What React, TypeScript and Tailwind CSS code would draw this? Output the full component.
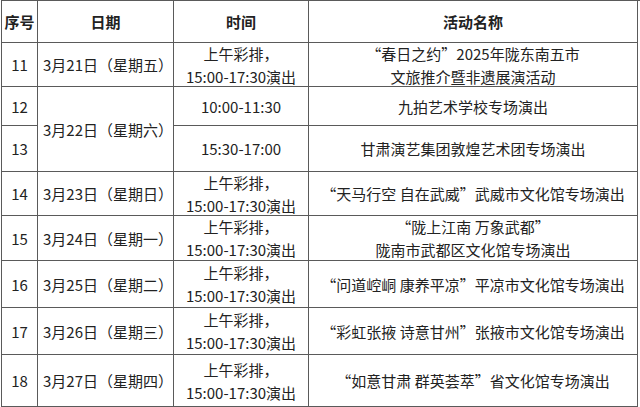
import React from "react";

type Row = {
  no: string;
  date?: string;
  dateSpan?: number;
  time: string[];
  name: string[];
  h: string;
};

const rows: Row[] = [
  { no: "11", date: "3月21日（星期五）", time: ["上午彩排，", "15:00-17:30演出"], name: ["“春日之约”2025年陇东南五市", "文旅推介暨非遗展演活动"], h: "h-[44px]" },
  { no: "12", date: "3月22日（星期六）", dateSpan: 2, time: ["10:00-11:30"], name: ["九拍艺术学校专场演出"], h: "h-[39px]" },
  { no: "13", time: ["15:30-17:00"], name: ["甘肃演艺集团敦煌艺术团专场演出"], h: "h-[46px]" },
  { no: "14", date: "3月23日（星期日）", time: ["上午彩排，", "15:00-17:30演出"], name: ["“天马行空 自在武威”武威市文化馆专场演出"], h: "h-[44px]" },
  { no: "15", date: "3月24日（星期一）", time: ["上午彩排，", "15:00-17:30演出"], name: ["“陇上江南 万象武都”", "陇南市武都区文化馆专场演出"], h: "h-[45px]" },
  { no: "16", date: "3月25日（星期二）", time: ["上午彩排，", "15:00-17:30演出"], name: ["“问道崆峒 康养平凉”平凉市文化馆专场演出"], h: "h-[47px]" },
  { no: "17", date: "3月26日（星期三）", time: ["上午彩排，", "15:00-17:30演出"], name: ["“彩虹张掖 诗意甘州”张掖市文化馆专场演出"], h: "h-[47px]" },
  { no: "18", date: "3月27日（星期四）", time: ["上午彩排，", "15:00-17:30演出"], name: ["“如意甘肃 群英荟萃”省文化馆专场演出"], h: "h-[52px]" },
];

const cell = "border-r border-b border-[#5a5a5a] flex items-center";

export default function App() {
  return (
    <div className="w-[640px] h-[407px] bg-white overflow-hidden">
      <div
        className="ml-[1px] grid grid-cols-[36px_136px_135px_329px] border-l border-t border-[#5a5a5a] text-[15px] leading-[23px] text-[#222]"
        style={{ fontFamily: '"Noto Sans CJK SC", "Noto Sans", sans-serif' }}
      >
        <div className={`${cell} h-[42px] justify-center font-bold`}>序号</div>
        <div className={`${cell} h-[42px] justify-center font-bold`}>日期</div>
        <div className={`${cell} h-[42px] justify-center font-bold`}>时间</div>
        <div className={`${cell} h-[42px] justify-center font-bold`}>活动名称</div>
        {rows.map((r) => (
          <React.Fragment key={r.no}>
            <div className={`${cell} ${r.h} justify-center`}>{r.no}</div>
            {r.date && (
              <div className={`${cell} pl-[5px] ${r.dateSpan === 2 ? "row-span-2" : r.h}`}>
                {r.date}
              </div>
            )}
            <div className={`${cell} ${r.h} flex-col justify-center text-center`}>
              {r.time.map((t) => (
                <div key={t}>{t}</div>
              ))}
            </div>
            <div className={`${cell} ${r.h} flex-col justify-center text-center`}>
              {r.name.map((t) => (
                <div key={t}>{t}</div>
              ))}
            </div>
          </React.Fragment>
        ))}
      </div>
    </div>
  );
}
